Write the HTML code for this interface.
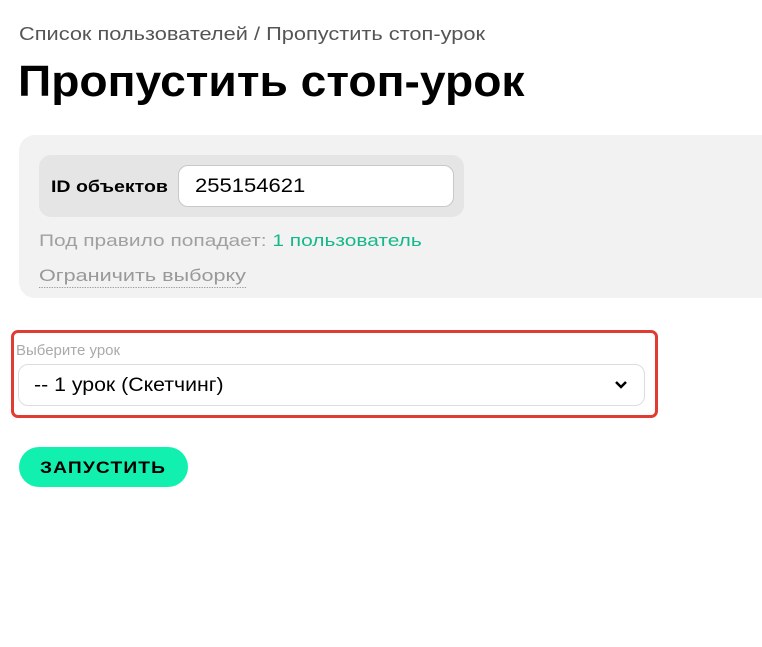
<!DOCTYPE html>
<html><head><meta charset="utf-8"><style>
body{margin:0;background:#fff;font-family:"Liberation Sans","DejaVu Sans",sans-serif;width:762px;height:647px;overflow:hidden;position:relative}
div,span{position:absolute;box-sizing:border-box;white-space:nowrap}
.s{transform-origin:0 0}
.bc{left:19px;top:24px;font-size:18px;color:#555;transform:scaleX(1.21)}
.h1{left:18px;top:57px;font-size:44px;font-weight:bold;color:#000;transform:scaleX(1.05)}
.panel{left:19px;top:135px;width:760px;height:163px;background:#f2f2f2;border-radius:16px}
.inner{left:39px;top:155px;width:425px;height:62px;background:#e5e5e5;border-radius:12px}
.lbl{left:51px;top:177px;font-size:17px;font-weight:bold;color:#000;transform:scaleX(1.15)}
.inp{left:178px;top:165px;width:276px;height:42px;background:#fff;border:1px solid #c8c8c8;border-radius:10px}
.inpt{left:195px;top:176px;font-size:19px;color:#000;transform:scaleX(1.16)}
.rule{left:39px;top:231px;font-size:17px;color:#a0a0a0;transform:scaleX(1.23)}
.rule b{font-weight:normal;color:#14b88a}
.lim{left:39px;top:265px;font-size:17px;color:#999;border-bottom:1px dotted #999;line-height:22px;transform:scaleX(1.27)}
.red{left:11px;top:330px;width:647px;height:88px;border:3px solid #e03c31;border-radius:7px}
.sl{left:16px;top:342px;font-size:15px;color:#aaa}
.sel{left:18px;top:364px;width:627px;height:42px;border:1px solid #ddd;border-radius:10px;background:#fff}
.selt{left:34px;top:375px;font-size:19px;color:#000;transform:scaleX(1.12)}
.btn{left:19px;top:447px;width:169px;height:40px;background:#12f0b0;border-radius:20px}
.btnt{left:40px;top:458px;font-size:17px;font-weight:bold;color:#000;letter-spacing:1px;transform:scaleX(1.13)}
</style></head><body>
<div class="bc s">Список пользователей / Пропустить стоп-урок</div>
<div class="h1 s">Пропустить стоп-урок</div>
<div class="panel"></div>
<div class="inner"></div>
<div class="lbl s">ID объектов</div>
<div class="inp"></div>
<div class="inpt s">255154621</div>
<div class="rule s">Под правило попадает: <b>1 пользователь</b></div>
<div class="lim s">Ограничить выборку</div>
<div class="red"></div>
<div class="sl">Выберите урок</div>
<div class="sel"><svg style="position:absolute;right:16px;top:15px" width="14" height="10" viewBox="0 0 14 10"><path d="M2 2l5 5 5-5" stroke="#000" stroke-width="2.5" fill="none"/></svg></div>
<div class="selt s">-- 1 урок (Скетчинг)</div>
<div class="btn"></div>
<div class="btnt s">ЗАПУСТИТЬ</div>
</body></html>
